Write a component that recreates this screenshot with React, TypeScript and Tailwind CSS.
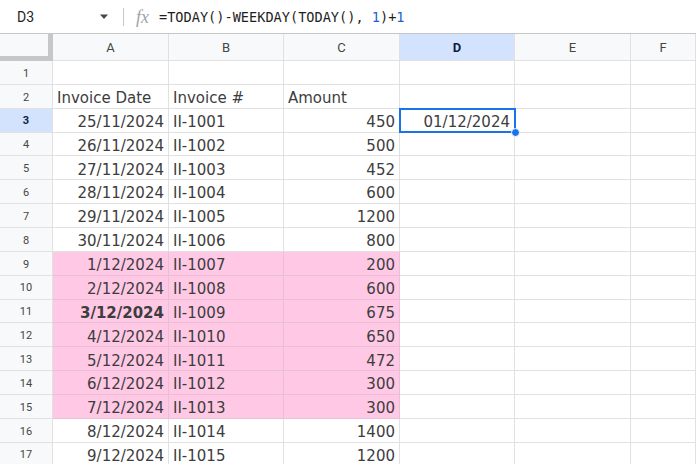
import React from "react";

const COLS = ["A", "B", "C", "D", "E", "F"];

type Row = { date: string; invoice: string; amount: string };

const rows: Row[] = [
  { date: "25/11/2024", invoice: "II-1001", amount: "450" },
  { date: "26/11/2024", invoice: "II-1002", amount: "500" },
  { date: "27/11/2024", invoice: "II-1003", amount: "452" },
  { date: "28/11/2024", invoice: "II-1004", amount: "600" },
  { date: "29/11/2024", invoice: "II-1005", amount: "1200" },
  { date: "30/11/2024", invoice: "II-1006", amount: "800" },
  { date: "1/12/2024", invoice: "II-1007", amount: "200" },
  { date: "2/12/2024", invoice: "II-1008", amount: "600" },
  { date: "3/12/2024", invoice: "II-1009", amount: "675" },
  { date: "4/12/2024", invoice: "II-1010", amount: "650" },
  { date: "5/12/2024", invoice: "II-1011", amount: "472" },
  { date: "6/12/2024", invoice: "II-1012", amount: "300" },
  { date: "7/12/2024", invoice: "II-1013", amount: "300" },
  { date: "8/12/2024", invoice: "II-1014", amount: "1400" },
  { date: "9/12/2024", invoice: "II-1015", amount: "1200" },
];

const cellFont = { fontFamily: '"DejaVu Sans", Verdana, sans-serif' };

function RowHeader({ n, active }: { n: number; active?: boolean }) {
  return (
    <div
      className={
        "flex h-[23.86px] items-center justify-center border-r border-b border-[#e1e1e1] pt-[3px] text-[11px] " +
        (active ? "bg-[#d3e3fd] font-bold text-[#0b1f44]" : "bg-[#f8f9fa] text-[#444746]")
      }
    >
      {n}
    </div>
  );
}

function Cell({
  children,
  align = "left",
  pink = false,
  bold = false,
}: {
  children?: React.ReactNode;
  align?: "left" | "right";
  pink?: boolean;
  bold?: boolean;
}) {
  return (
    <div
      style={cellFont}
      className={
        "flex h-[23.86px] items-center overflow-hidden whitespace-nowrap border-r border-b px-1 pt-[4px] text-[15px] text-[#3d3d3d] " +
        (align === "right" ? "justify-end " : "justify-start ") +
        (pink ? "border-[#e8c0d6] bg-[#ffc9e5] " : "border-[#e1e1e1] bg-white ") +
        (bold ? "font-bold" : "")
      }
    >
      {children}
    </div>
  );
}

export default function App() {
  return (
    <div
      className="h-[464px] w-[696px] overflow-hidden bg-white"
      style={{ fontFamily: 'Roboto, "Liberation Sans", Arial, sans-serif' }}
    >
      {/* formula bar */}
      <div className="flex h-[34px] items-center border-b border-[#c4c7c5] bg-white pt-[1px]">
        <div className="w-[84px] pl-[17px] text-[14px] text-[#1f1f1f]">D3</div>
        <svg width="10" height="6" viewBox="0 0 10 6" className="ml-[15px]">
          <path d="M1 0.5h8L5 5z" fill="#444746" />
        </svg>
        <div className="ml-[14px] h-[18px] w-px bg-[#c4c7c5]" />
        <div
          className="ml-[12px] text-[18px] italic text-[#a0a4a8]"
          style={{ fontFamily: '"Liberation Serif", "Times New Roman", serif' }}
        >
          fx
        </div>
        <div
          className="ml-[10px] text-[13.6px] text-[#1f1f1f]"
          style={{ fontFamily: '"DejaVu Sans Mono", "Liberation Mono", monospace' }}
        >
          =TODAY()-WEEKDAY(TODAY(), <span className="text-[#1a5fd1]">1</span>)+<span className="text-[#1a5fd1]">1</span>
        </div>
      </div>

      {/* sheet grid */}
      <div className="grid grid-cols-[53px_116px_115px_116px_115px_116px_1fr]">
        <div className="h-[27px] border-r-[5px] border-b-[5px] border-[#c7c7c7] bg-[#f8f9fa]" />
        {COLS.map((c) => (
          <div
            key={c}
            className={
              "flex h-[27px] items-center justify-center border-r border-b border-[#e1e1e1] pt-[1px] text-[13px] " +
              (c === "D" ? "bg-[#d3e3fd] font-bold text-[#0b1f44]" : "bg-[#f8f9fa] text-[#444746]")
            }
          >
            {c}
          </div>
        ))}

        <RowHeader n={1} />
        {COLS.map((c) => (
          <Cell key={c} />
        ))}

        <RowHeader n={2} />
        <Cell>Invoice Date</Cell>
        <Cell>Invoice #</Cell>
        <Cell>Amount</Cell>
        <Cell />
        <Cell />
        <Cell />

        {rows.map((r, i) => {
          const n = i + 3;
          const pink = n >= 9 && n <= 15;
          return (
            <React.Fragment key={n}>
              <RowHeader n={n} active={n === 3} />
              <Cell align="right" pink={pink} bold={n === 11}>
                {r.date}
              </Cell>
              <Cell pink={pink}>{r.invoice}</Cell>
              <Cell align="right" pink={pink}>
                {r.amount}
              </Cell>
              {n === 3 ? (
                <div className="relative">
                  <Cell align="right">01/12/2024</Cell>
                  <div className="absolute -top-px -left-px right-[-1px] bottom-0 border-2 border-[#1a73e8]" />
                  <div className="absolute right-[-5px] bottom-[-4px] h-[9px] w-[9px] rounded-full border border-white bg-[#1a73e8]" />
                </div>
              ) : (
                <Cell />
              )}
              <Cell />
              <Cell />
            </React.Fragment>
          );
        })}
      </div>
    </div>
  );
}
